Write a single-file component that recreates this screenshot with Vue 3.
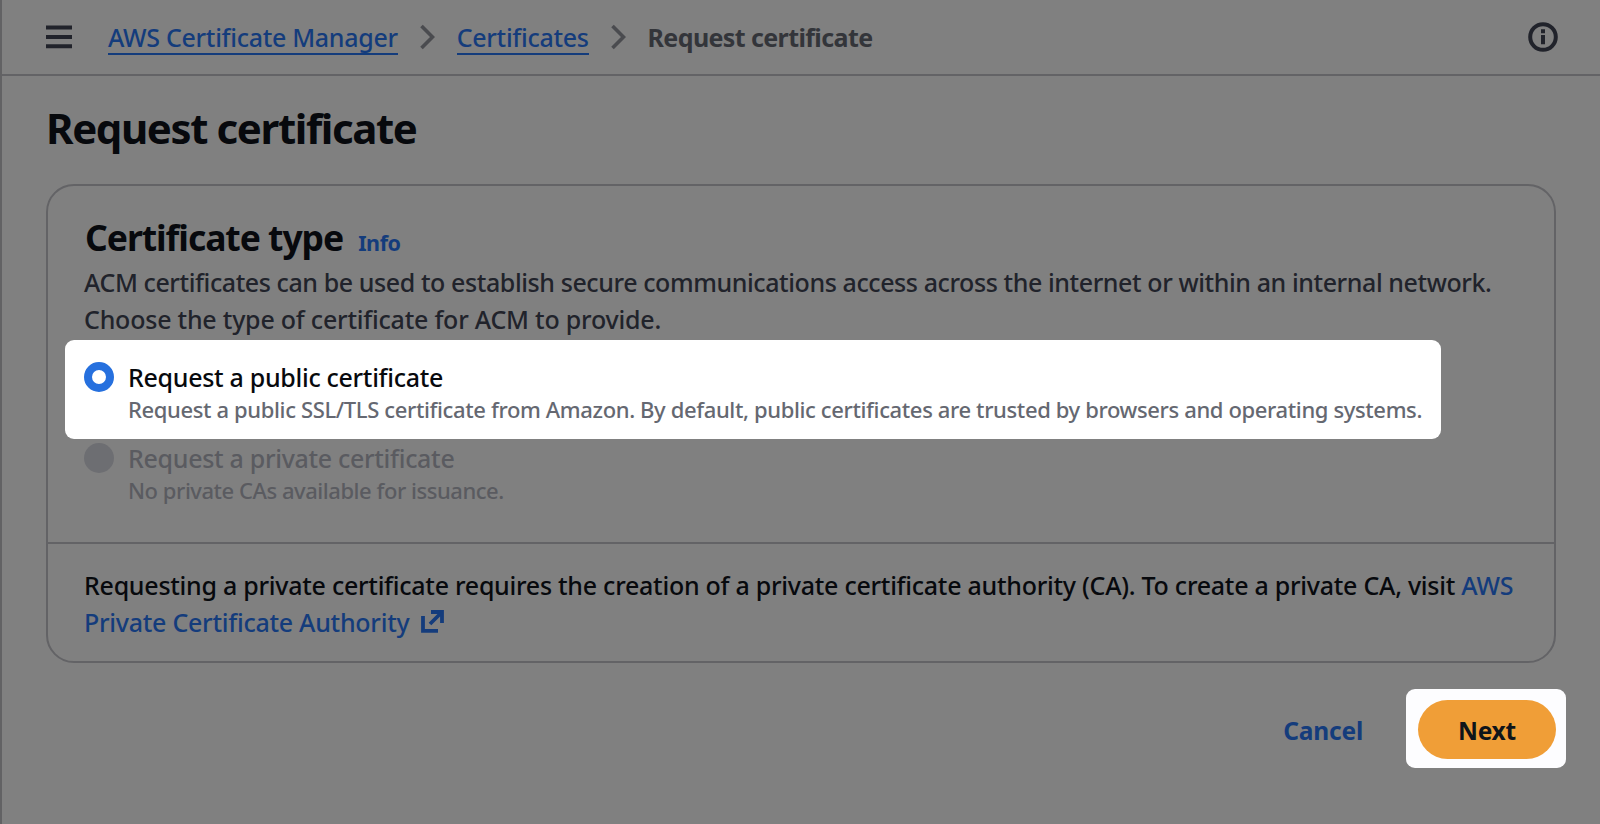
<template>
  <div class="console-page">
    <header class="top-bar">
      <button class="icon-btn" aria-label="Open navigation">
        <svg class="menu-icon" viewBox="0 0 26 24" fill="none" stroke="currentColor" stroke-width="4">
          <path d="M0 2.5h26M0 12h26M0 21.2h26"></path>
        </svg>
      </button>
      <nav class="breadcrumbs">
        <template v-for="crumb in breadcrumbs" :key="crumb.text">
          <a class="crumb-link" :class="crumb.id" href="#">{{ crumb.text }}</a>
          <svg class="chevron" viewBox="0 0 15 26" fill="none" stroke="currentColor" stroke-width="3.6">
            <path d="M1.5 2L12.5 13L1.5 24"></path>
          </svg>
        </template>
        <span class="crumb-current">Request certificate</span>
      </nav>
      <button class="icon-btn" aria-label="Info">
        <svg class="info-icon" viewBox="0 0 30 30" fill="none" stroke="currentColor" stroke-width="4">
          <circle cx="15" cy="15" r="12.8"></circle>
          <path d="M15 7.3v4M15 13v9.3"></path>
        </svg>
      </button>
    </header>

    <main class="content">
      <h1>Request certificate</h1>

      <section class="card">
        <div class="card-body">
          <div class="card-heading">
            <h2>Certificate type</h2>
            <a class="info-link" href="#">Info</a>
          </div>
          <p class="description">ACM certificates can be used to establish secure communications access across the internet or within an internal network. Choose the type of certificate for ACM to provide.</p>

          <div
            v-for="option in options"
            :key="option.id"
            class="option"
            :class="[option.id, { selected: option.id === certificateType, disabled: option.disabled }]"
            @click="selectType(option)"
          >
            <span class="radio"></span>
            <div class="option-text">
              <div class="option-label">{{ option.label }}</div>
              <div class="option-hint">{{ option.hint }}</div>
            </div>
          </div>
        </div>

        <div class="card-footer">
          Requesting a private certificate requires the creation of a private certificate authority (CA). To create a private CA, visit
          <a href="#">AWS</a>
          <br>
          <a href="#">Private Certificate Authority
            <svg class="external-icon" viewBox="0 0 23 23" fill="none" stroke="currentColor" stroke-width="3.8">
              <path d="M2 6v14.9h15M10 2h11v11M21 2L9 14"></path>
            </svg>
          </a>
        </div>
      </section>

      <div class="actions">
        <button class="cancel-btn">Cancel</button>
        <div class="next-spot">
          <button class="next-btn">Next</button>
        </div>
      </div>
    </main>
  </div>
</template>

<script setup>
import { ref } from 'vue';

const breadcrumbs = [
  { id: 'service', text: 'AWS Certificate Manager' },
  { id: 'list', text: 'Certificates' }
];

const options = [
  {
    id: 'public',
    label: 'Request a public certificate',
    hint: 'Request a public SSL/TLS certificate from Amazon. By default, public certificates are trusted by browsers and operating systems.',
    disabled: false
  },
  {
    id: 'private',
    label: 'Request a private certificate',
    hint: 'No private CAs available for issuance.',
    disabled: true
  }
];

const certificateType = ref('public');

const selectType = (option) => { if (!option.disabled) certificateType.value = option.id; };
</script>

<style>
body { margin: 0; background: #808080; }
</style>

<style scoped>
.console-page { box-sizing: border-box; height: 824px; border-left: 2px solid #626264; background: #808080; color: #07090d; font-family: "Noto Sans", "Open Sans", sans-serif; font-size: 25px; font-weight: 500; line-height: 36.6px; letter-spacing: -0.3px; overflow: hidden; }
.console-page button { padding: 0; border: none; background: none; font-family: inherit; cursor: pointer; }
a { color: #143c7c; text-decoration: none; }

.top-bar { display: flex; align-items: center; height: 74px; padding: 0 42px 0 44px; border-bottom: 2px solid #636366; }
.icon-btn { display: flex; color: #21232b; }
.menu-icon { width: 26px; height: 24px; }
.info-icon { width: 30px; height: 30px; }
.breadcrumbs { display: flex; align-items: center; flex: 1; margin-left: 36px; }
.crumb-link { height: 34px; line-height: 36px; border-bottom: 2px solid #143c7c; }
.chevron { width: 15px; height: 26px; margin: 0 22px 0 22px; color: #4a4b4f; }
.crumb-current { color: #33353a; font-weight: 700; letter-spacing: -0.6px; }

.content { padding: 27px 44px 0; }
h1 { margin: 0 0 31px; font-size: 42px; line-height: 50px; font-weight: 700; letter-spacing: -1.4px; }
.card { box-sizing: border-box; height: 479px; border: 2px solid #636366; border-radius: 28px; }
.card-body { box-sizing: border-box; height: 358px; padding: 29px 36px 0; border-bottom: 2px solid #636366; }
.card-heading { display: flex; align-items: baseline; gap: 15px; height: 44px; padding-left: 1px; }
h2 { margin: 0; font-size: 35.5px; line-height: 44px; font-weight: 700; letter-spacing: -1.05px; }
.info-link { font-size: 21.5px; font-weight: 700; letter-spacing: -0.4px; }
.description { margin: 5px 0 3px; color: #21232b; letter-spacing: -0.22px; }
.description::first-line { letter-spacing: -0.41px; }

.option { display: flex; gap: 15px; width: max-content; }
.option.selected { box-sizing: border-box; margin: 0 0 4px -19px; padding: 22px 19px 0 19px; height: 99px; border-radius: 9px; background: #fff; }
.radio { box-sizing: border-box; width: 30px; height: 30px; border-radius: 50%; background: #6d6e72; }
.selected .radio { border: 8.5px solid #2670de; background: #fff; }
.option-text { margin: -1px 0 0 -1px; }
.option-label { line-height: 32px; }
.option-hint { color: #656871; font-size: 22px; line-height: 32px; letter-spacing: -0.37px; }
.disabled { color: #5a5b60; }
.disabled .option-hint { color: #5a5b60; letter-spacing: -0.46px; }

.card-footer { padding: 23px 30px 0 36px; letter-spacing: -0.26px; }
.external-icon { width: 23px; height: 23px; margin-left: 5px; vertical-align: -1px; }

.actions { display: flex; justify-content: flex-end; align-items: center; gap: 43px; margin: 26px -10px 0 0; }
.cancel-btn, .next-btn { font-size: 24.5px; font-weight: 700; letter-spacing: -0.2px; }
.console-page .cancel-btn { padding-top: 3px; color: #143c7c; }
.next-spot { padding: 11px 10px 9px 12px; border-radius: 9px; background: #fdfdff; }
.console-page .next-btn { display: block; width: 138px; height: 59px; padding-top: 1px; border-radius: 30px; background: #f09e37; color: #0f141a; }
</style>
